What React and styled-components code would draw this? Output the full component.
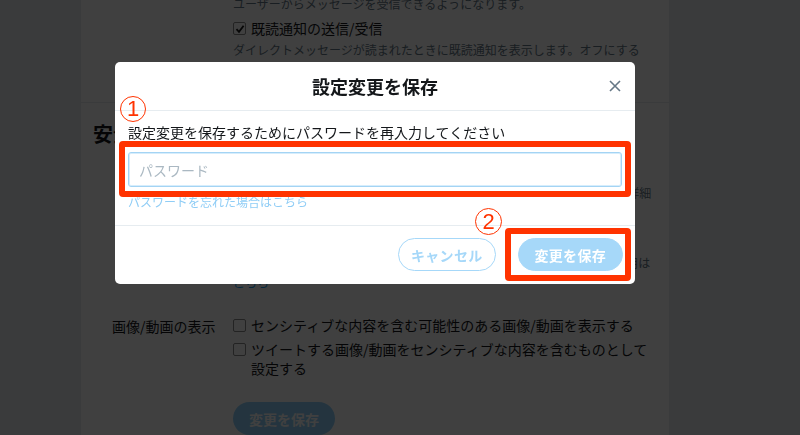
import React from "react";
import styled, { createGlobalStyle } from "styled-components";

const GlobalStyle = createGlobalStyle`
  html, body { margin: 0; padding: 0; }
  body {
    background: #e6ecf0;
    font-family: "Noto Sans CJK JP", "Noto Sans", sans-serif;
    overflow: hidden;
  }
  * { box-sizing: border-box; }
`;

const Page = styled.div`
  width: 800px;
  height: 435px;
  overflow: hidden;
`;

const Panel = styled.main`
  margin-left: 81px;
  width: 588px;
  height: 435px;
  background: #fff;
  overflow: hidden;
`;

const Section = styled.section`
  margin-top: ${(p) => p.$mt || 0}px;
  padding-top: ${(p) => p.$pt || 0}px;
  padding-bottom: ${(p) => p.$pb || 0}px;
  border-bottom: ${(p) => (p.$divider ? "1px solid #e6ecf0" : "none")};
`;

const Heading = styled.h3`
  margin: 0;
  padding-left: 12px;
  font-size: 20px;
  line-height: 28px;
  font-weight: 700;
  color: #14171a;
`;

const Row = styled.div`
  display: grid;
  grid-template-columns: 121px 422px;
  padding-left: 31px;
  margin-top: ${(p) => p.$mt || 0}px;
`;

const RowLabel = styled.div`
  font-size: 14px;
  line-height: 20px;
  color: #14171a;
`;

const Col = styled.div`
  display: flex;
  flex-direction: column;
`;

const Desc = styled.p`
  margin: ${(p) => p.$mt || 0}px 0 0;
  font-size: 12px;
  line-height: ${(p) => p.$lh || 18}px;
  color: #657786;
  white-space: nowrap;
`;

const Link = styled.a`
  color: #1da1f2;
  text-decoration: none;
`;

const CheckRow = styled.label`
  display: flex;
  align-items: flex-start;
  gap: 5px;
  margin-top: ${(p) => p.$mt || 0}px;
  font-size: 14px;
  line-height: ${(p) => p.$lh || 20}px;
  color: #14171a;
`;

const Box = styled.span`
  flex: none;
  width: 13px;
  height: 13px;
  margin-top: ${(p) => p.$top || 4}px;
  border: 1px solid #8a8a8a;
  border-radius: 2px;
  background: #fff;
  display: flex;
  align-items: center;
  justify-content: center;
`;

const BgButton = styled.button`
  display: block;
  margin-top: ${(p) => p.$mt || 0}px;
  height: ${(p) => p.$h || 33}px;
  padding: 0 16px;
  border: 0;
  border-radius: 999px;
  background: ${(p) => (p.$outline ? "#fff" : "#8ed0f9")};
  color: ${(p) => (p.$outline ? "#1da1f2" : "#fff")};
  font-family: "Noto Sans CJK JP", sans-serif;
  font-size: 14px;
  font-weight: 700;
  align-self: flex-start;
`;

const Overlay = styled.div`
  position: fixed;
  inset: 0;
  background: rgba(0, 0, 0, 0.75);
  padding: 62px 0 0 115px;
`;

const Modal = styled.div`
  position: relative;
  width: 520px;
  background: #fff;
  border-radius: 5px;
`;

const Header = styled.header`
  display: grid;
  grid-template-columns: 1fr auto 1fr;
  align-items: center;
  height: 49px;
  border-bottom: 1px solid #e6ecf0;
`;

const Title = styled.h2`
  grid-column: 2;
  margin: 0;
  font-size: 18px;
  line-height: 24px;
  font-weight: 700;
  color: #14171a;
`;

const Close = styled.button`
  grid-column: 3;
  justify-self: end;
  margin-right: 8px;
  width: 24px;
  height: 24px;
  padding: 0;
  border: 0;
  background: none;
  display: flex;
  align-items: center;
  justify-content: center;
`;

const Body = styled.div`
  padding: 11px 13px 15px;
`;

const Prompt = styled.p`
  margin: 0;
  font-size: 14px;
  line-height: 20px;
  color: #14171a;
`;

const Input = styled.input`
  display: block;
  width: 100%;
  height: 35px;
  margin-top: 10px;
  padding: 0 10px;
  border: 1px solid #a4d4f4;
  border-radius: 3px;
  box-shadow: inset 0 0 0 1px #d6edfc;
  font-family: "Noto Sans CJK JP", sans-serif;
  font-size: 14px;
  color: #14171a;
  outline: none;
  &::placeholder { color: #aab8c2; }
`;

const Forgot = styled.a`
  display: block;
  margin-top: 7px;
  font-size: 12px;
  line-height: 16px;
  color: #8fcdf6;
  text-decoration: none;
`;

const Footer = styled.footer`
  display: flex;
  justify-content: flex-end;
  gap: 22px;
  padding: 12px 12px 13px;
  border-top: 1px solid #e6ecf0;
`;

const Pill = styled.button`
  height: 33px;
  padding: 0 ${(p) => p.$px}px;
  border: 1px solid #a6d8f9;
  border-radius: 999px;
  background: ${(p) => (p.$primary ? "#a6d8f9" : "#fff")};
  color: ${(p) => (p.$primary ? "#fff" : "#a6d8f9")};
  font-family: "Noto Sans CJK JP", sans-serif;
  font-size: 14px;
  font-weight: 700;
  letter-spacing: 0.3px;
`;

const Marker = styled.div`
  position: absolute;
  left: ${(p) => p.$x}px;
  top: ${(p) => p.$y}px;
  width: ${(p) => p.$w}px;
  height: ${(p) => p.$h}px;
  border: 6px solid #ff3300;
  border-radius: 4px;
  pointer-events: none;
`;

const Num = styled.span`
  position: absolute;
  left: ${(p) => p.$x}px;
  top: ${(p) => p.$y}px;
  width: ${(p) => p.$size}px;
  height: ${(p) => p.$size}px;
  border: 1.5px solid #ff3300;
  border-radius: 50%;
  display: flex;
  align-items: center;
  justify-content: center;
  color: #ff3300;
  font-family: "Liberation Sans", Arial, sans-serif;
  font-size: 22px;
  font-weight: 400;
  line-height: 1;
`;

const Checkmark = () => (
  <svg width="10" height="10" viewBox="0 0 10 10">
    <path d="M1.5 5.2 L4 7.8 L8.6 1.8" fill="none" stroke="#1a1a1a" strokeWidth="1.8" />
  </svg>
);

export default function App() {
  return (
    <>
      <GlobalStyle />
      <Page>
        <Panel>
          <Section $mt={-5} $pb={25} $divider>
            <Row>
              <RowLabel />
              <Col>
                <Desc>ユーザーからメッセージを受信できるようになります。</Desc>
                <CheckRow $mt={5}>
                  <Box $top={4}>
                    <Checkmark />
                  </Box>
                  既読通知の送信/受信
                </CheckRow>
                <Desc $mt={3}>
                  ダイレクトメッセージが読まれたときに既読通知を表示します。オフにする
                  <br />
                  と、相手からの既読通知も表示されなくなります。
                </Desc>
              </Col>
            </Row>
          </Section>

          <Section $pt={17}>
            <Heading>安全</Heading>
            <Row $mt={14}>
              <RowLabel />
              <Col>
                <CheckRow>
                  <Box $top={4} />
                  ツイートに位置情報を追加する
                </CheckRow>
                <Desc $mt={2}>
                  ツイートに位置情報を追加すると、その場所がツイートに表示されます。詳細
                </Desc>
                <BgButton $outline $mt={10} $h={32}>
                  位置情報をすべて削除
                </BgButton>
                <Desc $mt={9} $lh={20}>
                  ツイートから位置情報をすべて削除します。位置情報のプライバシーと利用は
                  <br />
                  <Link>こちら</Link>
                </Desc>
              </Col>
            </Row>
          </Section>

          <Section>
            <Row $mt={23}>
              <RowLabel>画像/動画の表示</RowLabel>
              <Col>
                <CheckRow $lh={19}>
                  <Box $top={3} />
                  センシティブな内容を含む可能性のある画像/動画を表示する
                </CheckRow>
                <CheckRow $lh={19} $mt={5}>
                  <Box $top={3} />
                  <span>ツイートする画像/動画をセンシティブな内容を含むものとして設定する</span>
                </CheckRow>
                <BgButton $mt={24} $h={33}>
                  変更を保存
                </BgButton>
              </Col>
            </Row>
          </Section>
        </Panel>

        <Overlay>
          <Modal>
            <Header>
              <Title>設定変更を保存</Title>
              <Close aria-label="閉じる">
                <svg width="12" height="12" viewBox="0 0 12 12">
                  <path d="M1 1 L11 11 M11 1 L1 11" stroke="#657786" strokeWidth="1.6" fill="none" />
                </svg>
              </Close>
            </Header>
            <Body>
              <Prompt>設定変更を保存するためにパスワードを再入力してください</Prompt>
              <Input type="password" placeholder="パスワード" />
              <Forgot>パスワードを忘れた場合はこちら</Forgot>
            </Body>
            <Footer>
              <Pill $px={12}>キャンセル</Pill>
              <Pill $primary $px={16}>変更を保存</Pill>
            </Footer>

            <Marker $x={4} $y={79} $w={512} $h={56} />
            <Marker $x={390} $y={166} $w={126} $h={53} />
            <Num $x={5} $y={34} $size={26}>1</Num>
            <Num $x={360} $y={146} $size={27}>2</Num>
          </Modal>
        </Overlay>
      </Page>
    </>
  );
}
